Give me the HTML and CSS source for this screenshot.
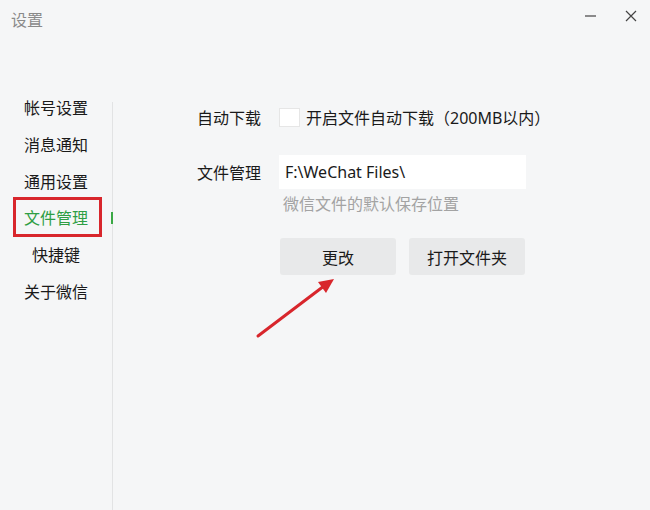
FILE: index.html
```html
<!DOCTYPE html>
<html lang="zh">
<head>
<meta charset="utf-8">
<title>设置</title>
<link rel="stylesheet" href="styles.css">
</head>
<body>
<div class="window">
  <div class="titlebar">
    <div class="title">设置</div>
    <div class="controls">
      <svg class="ctl" width="14" height="14" viewBox="0 0 14 14"><line x1="1" y1="7" x2="12" y2="7" stroke="#444" stroke-width="1.2"/></svg>
      <svg class="ctl" width="14" height="14" viewBox="0 0 14 14"><path d="M2 2 L12 12 M12 2 L2 12" stroke="#444" stroke-width="1.2" fill="none"/></svg>
    </div>
  </div>
  <div class="main">
    <nav class="sidebar">
      <div class="nav-item">帐号设置</div>
      <div class="nav-item">消息通知</div>
      <div class="nav-item">通用设置</div>
      <div class="nav-item active">文件管理</div>
      <div class="nav-item">快捷键</div>
      <div class="nav-item">关于微信</div>
    </nav>
    <div class="divider"></div>
    <section class="content">
      <div class="row row-auto">
        <div class="label">自动下载</div>
        <div class="field">
          <span class="checkbox"></span>
          <span class="check-text">开启文件自动下载（200MB以内）</span>
        </div>
      </div>
      <div class="row row-path">
        <div class="label">文件管理</div>
        <div class="field">
          <div class="input">F:\WeChat Files\</div>
        </div>
      </div>
      <div class="hint">微信文件的默认保存位置</div>
      <div class="buttons">
        <button class="btn">更改</button>
        <button class="btn">打开文件夹</button>
      </div>
    </section>
  </div>
  <svg class="arrow" width="650" height="510" viewBox="0 0 650 510">
    <line x1="258" y1="336" x2="324" y2="286" stroke="#d8262c" stroke-width="3" stroke-linecap="round"/>
    <polygon points="334,279 318,282 326,293" fill="#d8262c"/>
  </svg>
</div>
</body>
</html>
```
FILE: styles.css
```css
html, body {
  margin: 0;
  padding: 0;
}
body {
  background: #f5f6f7;
  font-family: "Noto Sans", "Noto Sans CJK SC", sans-serif;
  color: #222;
}
.window {
  position: relative;
  width: 650px;
  height: 510px;
  display: flex;
  flex-direction: column;
  background: #f5f6f7;
  overflow: hidden;
}
.titlebar {
  height: 40px;
  display: flex;
  align-items: center;
  justify-content: space-between;
  flex-shrink: 0;
}
.title {
  padding-left: 11px;
  font-size: 16px;
  color: #8a8a8a;
  margin-top: -2px;
}
.controls {
  display: flex;
  align-items: center;
  gap: 26px;
  padding-right: 12px;
  margin-top: -8px;
}
.ctl {
  display: block;
}
.main {
  flex: 1;
  display: flex;
}
.sidebar {
  width: 112px;
  padding-top: 50px;
  flex-shrink: 0;
}
.nav-item {
  position: relative;
  height: 36.8px;
  line-height: 36.8px;
  text-align: center;
  font-size: 16px;
  color: #1a1a1a;
}
.nav-item.active {
  color: #2f9e44;
}
.nav-item.active::before {
  content: "";
  position: absolute;
  left: 13px;
  top: -3px;
  width: 89px;
  height: 40px;
  box-sizing: border-box;
  border: 3px solid #d8262c;
}
.nav-item.active::after {
  content: "";
  position: absolute;
  left: 111px;
  top: 12px;
  width: 2px;
  height: 12px;
  background: #3aa845;
}
.divider {
  width: 1px;
  margin-top: 62px;
  background: #e2e3e4;
  flex-shrink: 0;
}
.content {
  flex: 1;
  padding-left: 84px;
}
.row {
  display: flex;
  align-items: center;
}
.row-auto {
  margin-top: 67px;
  height: 20px;
}
.row-path {
  margin-top: 28px;
}
.label {
  width: 82px;
  font-size: 16px;
  color: #1a1a1a;
  flex-shrink: 0;
}
.field {
  display: flex;
  align-items: center;
}
.checkbox {
  width: 21px;
  height: 19px;
  background: #fff;
  border: 1px solid #e6e6e6;
  box-sizing: border-box;
  margin-right: 6px;
}
.check-text {
  font-size: 16px;
  color: #1a1a1a;
}
.input {
  width: 247px;
  height: 34px;
  line-height: 34px;
  background: #fff;
  box-sizing: border-box;
  padding-left: 6px;
  font-size: 16px;
  color: #1a1a1a;
}
.hint {
  margin-top: 5px;
  margin-left: 86px;
  line-height: 20px;
  font-size: 16px;
  color: #a3a3a3;
}
.buttons {
  margin-top: 24px;
  margin-left: 83px;
  display: flex;
  gap: 13px;
}
.btn {
  width: 116px;
  height: 37px;
  border: none;
  border-radius: 3px;
  background: #e8e9ea;
  font-family: "Noto Sans", "Noto Sans CJK SC", sans-serif;
  font-size: 16px;
  color: #1a1a1a;
  padding: 0;
}
.arrow {
  position: absolute;
  left: 0;
  top: 0;
  pointer-events: none;
}
```
